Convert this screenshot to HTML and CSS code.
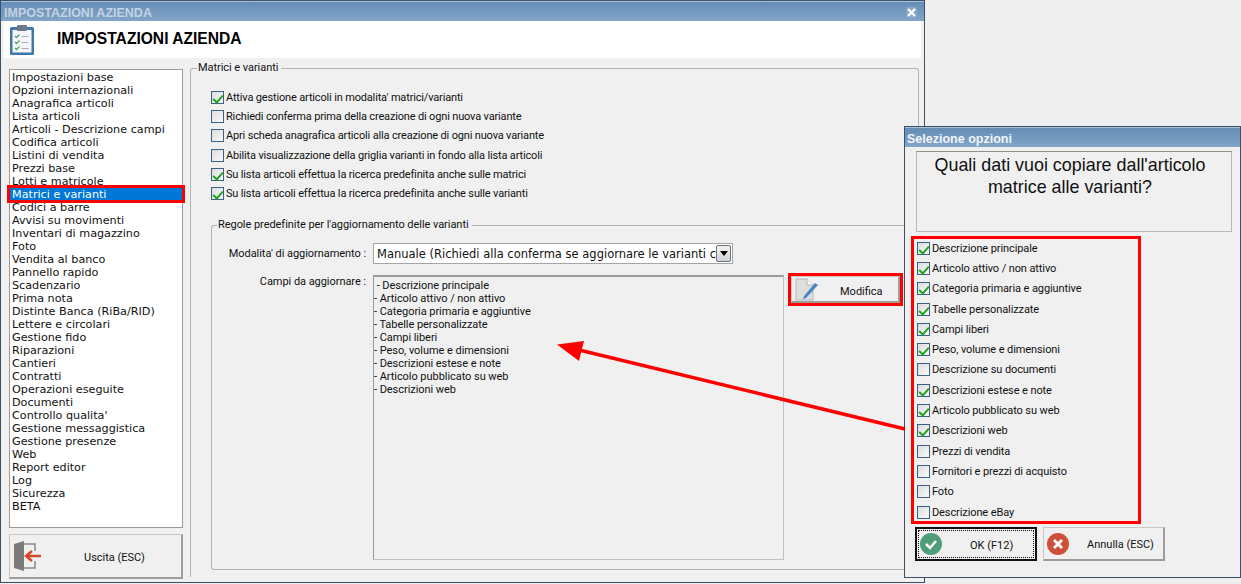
FILE: index.html
```html
<!DOCTYPE html>
<html lang="en">
<head>
  <meta charset="UTF-8">
  <title>Impostazioni azienda</title>
  <link rel="stylesheet" href="styles.css">
</head>
<body>
  <div class="desktop">

    <!-- Main window -->
    <div class="window main-window">
      <div class="titlebar">
        <span class="title-dim">IMPOSTAZIONI AZIENDA</span>
        <span class="close-btn">
          <svg width="9" height="9" viewBox="0 0 9 9"><path d="M1 1l7 7M8 1l-7 7" stroke="#fff" stroke-width="2.4"/></svg>
        </span>
      </div>
      <div class="header">
        <svg class="header-icon" width="26" height="32" viewBox="0 0 26 32">
          <rect x="1" y="3" width="24" height="28" rx="1.5" fill="#3f78ad"/>
          <rect x="3.5" y="6" width="19" height="22.5" fill="#f4f6f7"/>
          <rect x="8" y="1" width="10" height="6" rx="1" fill="#6d7a86"/>
          <path d="M6 12l1.5 1.5L10.5 10.5M6 18l1.5 1.5 3-3M6 24l1.500 1.500 3-3" fill="none" stroke="#4fa561" stroke-width="1.300"/>
          <path d="M12.500 12.500h7M12.500 18.500h7M12.500 24.500h7" stroke="#a9b1b8" stroke-width="1.200"/>
        </svg>
        <h1>IMPOSTAZIONI AZIENDA</h1>
      </div>

      <div class="main-body">
        <div class="sidebar">
          <ul class="menu-list">
            <li>Impostazioni base</li>
            <li>Opzioni internazionali</li>
            <li>Anagrafica articoli</li>
            <li>Lista articoli</li>
            <li>Articoli - Descrizione campi</li>
            <li>Codifica articoli</li>
            <li>Listini di vendita</li>
            <li>Prezzi base</li>
            <li>Lotti e matricole</li>
            <li class="selected">Matrici e varianti</li>
            <li>Codici a barre</li>
            <li>Avvisi su movimenti</li>
            <li>Inventari di magazzino</li>
            <li>Foto</li>
            <li>Vendita al banco</li>
            <li>Pannello rapido</li>
            <li>Scadenzario</li>
            <li>Prima nota</li>
            <li>Distinte Banca (RiBa/RID)</li>
            <li>Lettere e circolari</li>
            <li>Gestione fido</li>
            <li>Riparazioni</li>
            <li>Cantieri</li>
            <li>Contratti</li>
            <li>Operazioni eseguite</li>
            <li>Documenti</li>
            <li>Controllo qualita'</li>
            <li>Gestione messaggistica</li>
            <li>Gestione presenze</li>
            <li>Web</li>
            <li>Report editor</li>
            <li>Log</li>
            <li>Sicurezza</li>
            <li>BETA</li>
          </ul>
          <button class="btn exit-btn" type="button">
            <svg width="28" height="32" viewBox="0 0 28 32">
              <path d="M1 4l10-3v30l-10-3z" fill="#7b7b7b"/>
              <path d="M11 4h11v7M22 21v7H11" fill="none" stroke="#8a8a8a" stroke-width="1.500"/>
              <path d="M28 16H14M19 11l-6 5 6 5" fill="none" stroke="#d2492f" stroke-width="2.500"/>
            </svg>
            <span>Uscita (ESC)</span>
          </button>
        </div>

        <fieldset class="group outer-group">
          <legend>Matrici e varianti</legend>

          <div class="check-list">
            <label class="check-row"><input type="checkbox" class="chk" checked>Attiva gestione articoli in modalita' matrici/varianti</label>
            <label class="check-row"><input type="checkbox" class="chk">Richiedi conferma prima della creazione di ogni nuova variante</label>
            <label class="check-row"><input type="checkbox" class="chk">Apri scheda anagrafica articoli alla creazione di ogni nuova variante</label>
            <label class="check-row"><input type="checkbox" class="chk">Abilita visualizzazione della griglia varianti in fondo alla lista articoli</label>
            <label class="check-row"><input type="checkbox" class="chk" checked>Su lista articoli effettua la ricerca predefinita anche sulle matrici</label>
            <label class="check-row"><input type="checkbox" class="chk" checked>Su lista articoli effettua la ricerca predefinita anche sulle varianti</label>
          </div>

          <fieldset class="group inner-group">
            <legend>Regole predefinite per l'aggiornamento delle varianti</legend>

            <div class="form-row mode-row">
              <span class="form-label">Modalita' di aggiornamento :</span>
              <div class="select-box">
                <span class="select-text">Manuale (Richiedi alla conferma se aggiornare le varianti c</span>
                <span class="select-arrow"></span>
              </div>
            </div>

            <div class="form-row fields-row">
              <span class="form-label">Campi da aggiornare :</span>
              <div class="memo">
                <div>&nbsp;- Descrizione principale</div>
                <div>- Articolo attivo / non attivo</div>
                <div>- Categoria primaria e aggiuntive</div>
                <div>- Tabelle personalizzate</div>
                <div>- Campi liberi</div>
                <div>- Peso, volume e dimensioni</div>
                <div>- Descrizioni estese e note</div>
                <div>- Articolo pubblicato su web</div>
                <div>- Descrizioni web</div>
              </div>
              <div class="highlight modifica-wrap">
                <button class="btn modifica-btn" type="button">
                  <svg width="24" height="24" viewBox="0 0 24 24">
                    <path d="M1 2h11l6 6v15H1z" fill="#dedede" stroke="#b4b4b4"/>
                    <path d="M12 2v6h6" fill="#fff" stroke="#b4b4b4"/>
                    <path d="M9 19L20 6l3 2-12 13-3 1z" fill="#4a86c5"/>
                  </svg>
                  <span>Modifica</span>
                </button>
              </div>
            </div>
          </fieldset>
        </fieldset>
      </div>
    </div>

    <!-- Options dialog -->
    <div class="window options-dialog">
      <div class="titlebar dialog-title">Selezione opzioni</div>
      <div class="question">Quali dati vuoi copiare dall'articolo<br>matrice alle varianti?</div>

      <div class="highlight options-box">
        <label class="option-row"><input type="checkbox" class="chk" checked>Descrizione principale</label>
        <label class="option-row"><input type="checkbox" class="chk" checked>Articolo attivo / non attivo</label>
        <label class="option-row"><input type="checkbox" class="chk" checked>Categoria primaria e aggiuntive</label>
        <label class="option-row"><input type="checkbox" class="chk" checked>Tabelle personalizzate</label>
        <label class="option-row"><input type="checkbox" class="chk" checked>Campi liberi</label>
        <label class="option-row"><input type="checkbox" class="chk" checked>Peso, volume e dimensioni</label>
        <label class="option-row"><input type="checkbox" class="chk">Descrizione su documenti</label>
        <label class="option-row"><input type="checkbox" class="chk" checked>Descrizioni estese e note</label>
        <label class="option-row"><input type="checkbox" class="chk" checked>Articolo pubblicato su web</label>
        <label class="option-row"><input type="checkbox" class="chk" checked>Descrizioni web</label>
        <label class="option-row"><input type="checkbox" class="chk">Prezzi di vendita</label>
        <label class="option-row"><input type="checkbox" class="chk">Fornitori e prezzi di acquisto</label>
        <label class="option-row"><input type="checkbox" class="chk">Foto</label>
        <label class="option-row"><input type="checkbox" class="chk">Descrizione eBay</label>
      </div>

      <div class="dialog-buttons">
        <button class="btn dialog-btn default-btn" type="button">
          <svg width="22" height="22" viewBox="0 0 22 22">
            <circle cx="11" cy="11" r="11" fill="#4f9d78"/>
            <path d="M6 11l4 4 6-7" fill="none" stroke="#fff" stroke-width="2.500"/>
          </svg>
          <span>OK (F12)</span>
        </button>
        <button class="btn dialog-btn" type="button">
          <svg width="22" height="22" viewBox="0 0 22 22">
            <circle cx="11" cy="11" r="11" fill="#d04f38"/>
            <path d="M7 7l8 8M15 7l-8 8" fill="none" stroke="#fff" stroke-width="2.800"/>
          </svg>
          <span>Annulla (ESC)</span>
        </button>
      </div>
    </div>

    <!-- Red marks drawn on top of the screenshot -->
    <div class="mark-selected"></div>
    <svg class="mark-arrow" width="360" height="100" viewBox="0 0 360 100">
      <path d="M350 87L20 7" stroke="#f00" stroke-width="3.500"/>
      <path d="M2 2.500L29 -1 24 19z" fill="#f00"/>
    </svg>
  </div>
</body>
</html>
```

FILE: styles.css
```css
* {
  box-sizing: border-box;
}

body {
  margin: 0;
  background: #efefef;
  font-family: Roboto, Arial, sans-serif;
  font-size: 11px;
  letter-spacing: -0.050px;
  color: #111;
}

.desktop {
  position: relative;
  width: 1241px;
  height: 584px;
  overflow: hidden;
}

.window {
  position: absolute;
  background: #f0f0f0;
  border: 1px solid #3b5168;
}

.main-window {
  left: 0;
  top: 0;
  width: 925px;
  height: 583px;
}

.options-dialog {
  left: 904px;
  top: 126px;
  width: 337px;
  height: 452px;
}

.titlebar {
  display: flex;
  align-items: center;
  justify-content: space-between;
  height: 20px;
  padding: 2px 7px 0 3px;
  border-top: 1px solid #a9c0d8;
  background: linear-gradient(#658db6, #82a5c8);
}

.title-dim {
  font-family: "Liberation Sans", Arial, sans-serif;
  font-size: 12.500px;
  font-weight: bold;
  letter-spacing: 0;
  color: #c4d3e3;
}

.close-btn {
  display: flex;
  align-items: center;
  justify-content: center;
  width: 11px;
  height: 11px;
  background: #88a6c6;
}

.header {
  display: flex;
  align-items: center;
  height: 37px;
  margin: 0 3px;
  padding-left: 5px;
  background: #fff;
}

.header h1 {
  margin: -2px 0 0 22px;
  font-family: "Liberation Sans", Arial, sans-serif;
  font-size: 15.600px;
  font-weight: bold;
  letter-spacing: 0;
  color: #000;
}

.main-body {
  display: flex;
  align-items: flex-start;
  padding: 3px 0 0 8px;
}

.sidebar {
  width: 174px;
  margin-top: 8px;
  margin-right: 7px;
}

.menu-list {
  height: 459px;
  margin: 0;
  padding: 1px 0 0 0;
  list-style: none;
  background: #fff;
  border: 1px solid #9a9a9a;
  font-family: "DejaVu Sans", sans-serif;
  letter-spacing: 0;
}

.menu-list li {
  height: 13px;
  padding-left: 2px;
  font-size: 11.200px;
  line-height: 13px;
  white-space: nowrap;
}

.menu-list .selected {
  background: #0078d7;
  color: #fff;
}

.btn {
  display: flex;
  align-items: center;
  padding: 0;
  background: #f0f0f0;
  border: 1px solid #c8c8c8;
  border-right: 2px solid #9c9c9c;
  border-bottom: 2px solid #9c9c9c;
  font-family: inherit;
  font-size: 11px;
  color: #111;
}

.btn span {
  margin-top: 3px;
}

.exit-btn {
  width: 174px;
  height: 45px;
  margin-top: 6px;
  padding-left: 3px;
}

.exit-btn span {
  margin-left: 43px;
}

.group {
  margin: 0;
  border: 1px solid #b4b4b4;
  border-radius: 3px;
}

.group legend {
  padding: 0 3px 0 1px;
  line-height: 14px;
  white-space: nowrap;
}

.outer-group {
  width: 729px;
  height: 516px;
  padding: 13px 0 0 20px;
  border-bottom: none;
  border-radius: 3px 3px 0 0;
}

.outer-group > legend {
  margin-left: -14px;
}

.check-list {
  display: flex;
  flex-direction: column;
}

.check-row {
  display: flex;
  align-items: center;
  height: 19.200px;
  letter-spacing: -0.160px;
  white-space: nowrap;
}

.chk {
  appearance: none;
  position: relative;
  flex: none;
  width: 13px;
  height: 13px;
  margin: 0 2px 0 0;
  background: linear-gradient(135deg, #dcdcdc, #fafafa);
  border: 1px solid #3a6186;
}

.chk:checked::after {
  content: "";
  position: absolute;
  left: 3px;
  top: 1px;
  width: 4px;
  height: 8px;
  border-right: 2px solid #21a121;
  border-bottom: 2px solid #21a121;
  transform: rotate(42deg);
}

.inner-group {
  width: 707px;
  height: 352px;
  margin-top: 15px;
  padding: 11px 0 0 0;
  border-right: none;
}

.inner-group > legend {
  margin-left: 5px;
}

.form-row {
  display: flex;
  align-items: center;
}

.form-label {
  width: 155px;
  padding-right: 1px;
  text-align: right;
  white-space: nowrap;
}

.mode-row {
  height: 21px;
}

.select-box {
  display: flex;
  align-items: center;
  justify-content: space-between;
  width: 360px;
  height: 21px;
  margin-left: 6px;
  padding: 0 1px 0 3px;
  background: #fff;
  border: 1px solid #a5a5a5;
  font-family: "DejaVu Sans", sans-serif;
  font-size: 11.500px;
  letter-spacing: 0;
  white-space: nowrap;
}

.select-text {
  overflow: hidden;
}

.select-arrow {
  position: relative;
  flex: none;
  width: 15px;
  height: 17px;
  background: linear-gradient(#f2f2f2, #cfd3d8);
  border: 1px solid #70757b;
  border-radius: 2px;
}

.select-arrow::after {
  content: "";
  position: absolute;
  left: 3px;
  top: 5px;
  border: 4px solid transparent;
  border-top: 5px solid #000;
  border-bottom: none;
}

.fields-row {
  align-items: flex-start;
  margin-top: 11px;
}

.memo {
  width: 411px;
  height: 285px;
  margin-left: 6px;
  padding: 2px 0 0 0;
  background: #f0f0f0;
  border: 1px solid #c2c2c2;
  border-top: 2px solid #9a9a9a;
  border-left: 1px solid #9a9a9a;
  line-height: 13px;
}

.highlight {
  border: 3px solid #f00;
}

.modifica-wrap {
  width: 115px;
  height: 33px;
  margin: -2px 0 0 4px;
}

.modifica-btn {
  width: 109px;
  height: 27px;
  padding-left: 3px;
}

.modifica-btn span {
  margin-top: 5px;
  margin-left: 21px;
}

.dialog-title {
  justify-content: flex-start;
  padding-left: 2px;
  font-family: "Liberation Sans", Arial, sans-serif;
  font-size: 12.500px;
  font-weight: bold;
  letter-spacing: 0;
  color: #f0f4f8;
}

.question {
  height: 81px;
  margin: 4px 8px 0 11px;
  padding: 2px 8px 0 0;
  border: 1px solid #b8b8b8;
  border-top-color: #8f8f8f;
  font-family: "Liberation Sans", Arial, sans-serif;
  font-size: 17.900px;
  letter-spacing: 0;
  line-height: 22px;
  text-align: center;
}

.options-box {
  width: 230px;
  height: 288px;
  margin: 4px 0 0 6px;
  padding: 0 0 0 3px;
}

.option-row {
  display: flex;
  align-items: center;
  height: 20.300px;
  letter-spacing: -0.100px;
  white-space: nowrap;
}

.option-row:first-child {
  margin-top: -1px;
}

.dialog-buttons {
  display: flex;
  gap: 6px;
  margin: 3px 0 0 10px;
}

.dialog-btn {
  width: 122px;
  height: 34px;
  padding-left: 3px;
}

.dialog-btn span {
  margin-top: 2px;
  margin-left: 18px;
}

.default-btn {
  border: 2px solid #111;
  outline: 1px dotted #111;
  outline-offset: -4px;
}

.default-btn span {
  margin-left: 28px;
}

.mark-selected {
  position: absolute;
  left: 7px;
  top: 185px;
  width: 178px;
  height: 18px;
  border: 3px solid #f00;
}

.mark-arrow {
  position: absolute;
  left: 555px;
  top: 342px;
  overflow: visible;
}
```
